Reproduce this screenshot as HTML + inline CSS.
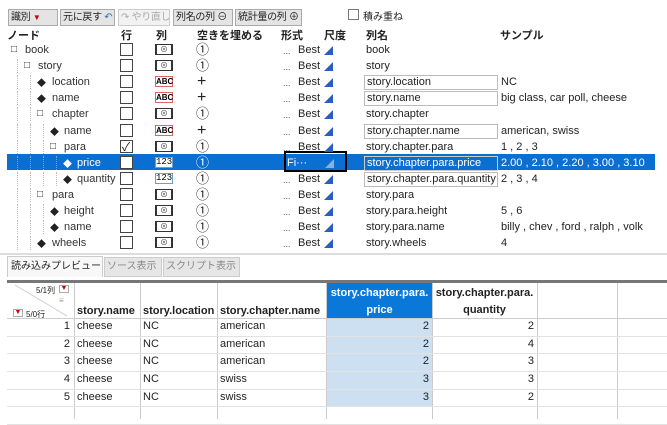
<!DOCTYPE html>
<html><head><meta charset="utf-8"><style>
*{box-sizing:border-box;margin:0;padding:0}
body{width:667px;height:419px;overflow:hidden;background:#fff;font-family:"Liberation Sans","Noto Sans CJK JP",sans-serif;font-size:11px;color:#222;position:relative}
.a{position:absolute;white-space:nowrap}
.btn{position:absolute;top:9px;height:17px;border:1px solid #aaa;background:#e4e4e4;font-size:10px;line-height:15px;padding:0 2px;white-space:nowrap;overflow:hidden;letter-spacing:-0.3px}
.cb{position:absolute;width:13px;height:13px;border:1px solid #444;background:#fff}
.ci{position:absolute;width:18px;height:11px;border:1px solid #333;border-left-width:2px;border-right-width:2px;font-size:8px;line-height:9px;text-align:center;color:#555}
.abc{border:1px solid #d66;font-weight:bold;color:#000;font-size:8px;border-width:1px}
.n123{border:1px solid #6aa0d0;font-family:"Liberation Mono",monospace;font-size:9px;color:#000;border-width:1px}
.fl{position:absolute;font-size:13px;line-height:12px}
.tri{position:absolute;width:0;height:0;border-left:9px solid transparent;border-bottom:9px solid #2a5fc0}
.nb{position:absolute;height:15px;border:1px solid #bbb;background:#fff;padding-left:2px;line-height:13px;width:134px}
.dots{position:absolute;font-size:9px;color:#555}
.vl{position:absolute;border-left:1px dotted #bbb;width:0;height:14px}
.hd{position:absolute;font-weight:bold;font-size:11px}
</style></head><body>
<div class="btn" style="left:8px;width:50px">識別 <span style="color:#c00;font-size:8px">▼</span></div>
<div class="btn" style="left:60px;width:55px">元に戻す <span style="color:#2a6fc0">↶</span></div>
<div class="btn" style="left:118px;width:52px;color:#aaa;background:#f2f2f2;border-color:#ccc">↷ やり直し</div>
<div class="btn" style="left:173px;width:60px">列名の列 ⊖</div>
<div class="btn" style="left:235px;width:67px">統計量の列 ⊕</div>
<div class="cb" style="left:348px;top:9px;width:11px;height:11px;border-color:#777"></div>
<div class="a" style="left:363px;top:8px;font-size:10px">積み重ね</div>
<div class="hd a" style="left:7px;top:27px">ノード</div>
<div class="hd a" style="left:121px;top:27px">行</div>
<div class="hd a" style="left:156px;top:27px">列</div>
<div class="hd a" style="left:197px;top:27px">空きを埋める</div>
<div class="hd a" style="left:281px;top:27px">形式</div>
<div class="hd a" style="left:324px;top:27px">尺度</div>
<div class="hd a" style="left:366px;top:27px">列名</div>
<div class="hd a" style="left:500px;top:27px">サンプル</div>
<div class="a" style="left:7px;top:154px;width:648px;height:16px;background:#0a6fd0"></div>
<div class="a" style="left:284px;top:151px;width:63px;height:21px;border:2px solid #000"></div>
<div id="rows"></div>
<div class="a" style="left:0;top:253px;width:667px;height:2px;background:#ddd"></div>
<div class="a" style="left:7px;top:256px;width:96px;height:21px;border:1px solid #ccc;border-bottom:none;background:#f8f8f8;line-height:20px;padding-left:3px;font-size:10px;overflow:hidden">読み込みプレビュー</div>
<div class="a" style="left:104px;top:257px;width:58px;height:20px;background:#e6e6e6;border:1px solid #ccc;color:#888;line-height:18px;padding-left:2px;font-size:10px;overflow:hidden">ソース表示</div>
<div class="a" style="left:163px;top:257px;width:77px;height:20px;background:#e6e6e6;border:1px solid #ccc;color:#888;line-height:18px;padding-left:2px;font-size:10px;overflow:hidden">スクリプト表示</div>
<div class="a" style="left:7px;top:280px;width:660px;height:3px;background:#777"></div>
<div id="tbl"></div>
<script>
var R=[
["□",14,25,"book","c","1",0,"book",""],
["□",27,38,"story","c","1",0,"story",""],
["◆",40,52,"location","a","+",0,"story.location","NC",1],
["◆",40,52,"name","a","+",0,"story.name","big class, car poll, cheese",1],
["□",40,52,"chapter","c","1",0,"story.chapter",""],
["◆",53,64,"name","a","+",0,"story.chapter.name","american, swiss",1],
["□",53,64,"para","c","1",1,"story.chapter.para","1 , 2 , 3"],
["◆",66,77,"price","n","1",0,"story.chapter.para.price","2.00 , 2.10 , 2.20 , 3.00 , 3.10",1],
["◆",66,77,"quantity","n","1",0,"story.chapter.para.quantity","2 , 3 , 4",1],
["□",40,52,"para","c","1",0,"story.para",""],
["◆",53,64,"height","c","1",0,"story.para.height","5 , 6"],
["◆",53,64,"name","c","1",0,"story.para.name","billy , chev , ford , ralph , volk"],
["◆",40,52,"wheels","c","1",0,"story.wheels","4"]];
var h="";
R.forEach(function(r,i){var y=42+i*16.1,ty=y+2,sel=i==7,c=sel?"#fff":"#222";
for(var x=14;x<r[1]-4;x+=13)h+='<div class="vl" style="left:'+(x+3)+'px;top:'+(y+1)+'px;border-color:'+(sel?'#7ab':'#bbb')+'"></div>';
h+='<div class="a" style="left:'+(r[1]-3)+'px;top:'+ty+'px;font-size:'+(r[0]=="□"?10:9)+'px;color:'+c+'">'+r[0]+'</div>';
h+='<div class="a" style="left:'+r[2]+'px;top:'+ty+'px;color:'+(sel?"#fff":"#333")+'">'+r[3]+'</div>';
h+='<div class="cb" style="left:120px;top:'+(y+1)+'px">'+(r[6]?'<span style="position:absolute;left:1px;top:-3px;font-size:12px">✓</span>':'')+'</div>';
var t=r[4]=="c"?'<div class="ci" style="left:155px;top:'+(y+2)+'px">⊗</div>':r[4]=="a"?'<div class="ci abc" style="left:155px;top:'+(y+2)+'px">ABC</div>':'<div class="ci n123" style="left:155px;top:'+(y+2)+'px;background:#fff">123</div>';
h+=t;
h+=r[5]=="1"?'<div class="fl" style="left:196px;top:'+(y+2)+'px;color:'+c+'">①</div>':'<div class="fl" style="left:197px;top:'+(y+2)+'px;font-size:16px">+</div>';
if(sel){h+='<div class="a" style="left:287px;top:'+ty+'px;color:#fff">Fi···</div><div class="tri" style="left:325px;top:'+(y+4)+'px;border-bottom-color:#8ab0d8"></div>';}
else{h+='<div class="dots" style="left:283px;top:'+(ty+2)+'px">...</div><div class="a" style="left:298px;top:'+ty+'px">Best</div><div class="tri" style="left:324px;top:'+(y+4)+'px"></div>';}
if(r[9])h+='<div class="nb" style="left:364px;top:'+(y+1)+'px;'+(sel?'background:#0a6fd0;color:#fff;border-color:#ccc':'')+'">'+r[7]+'</div>';
else h+='<div class="a" style="left:366px;top:'+ty+'px">'+r[7]+'</div>';
h+='<div class="a" style="left:501px;top:'+ty+'px;color:'+c+'">'+r[8]+'</div>';});
document.getElementById("rows").innerHTML=h;
var cols=[7,74,140,217,326,432,537,617,667];
var D=[["cheese","NC","american",2,2],["cheese","NC","american",2,4],["cheese","NC","american",2,3],["cheese","NC","swiss",3,3],["cheese","NC","swiss",3,2]];
var t="";
for(var i=1;i<cols.length-1;i++)t+='<div class="a" style="left:'+cols[i]+'px;top:283px;width:1px;height:136px;background:#ccc"></div>';
t+='<div class="a" style="left:327px;top:283px;width:105px;height:35px;background:#0a78d8"></div>';
t+='<div class="a" style="left:327px;top:318px;width:105px;height:88px;background:#cce0f2"></div>';
t+='<div class="a" style="left:7px;top:318px;width:660px;height:1px;background:#ccc"></div>';
for(var j=0;j<6;j++)t+='<div class="a" style="left:7px;top:'+(335.5+j*17.7)+'px;width:660px;height:1px;background:#e2e2e2"></div>';
t+='<svg class="a" style="left:7px;top:283px" width="67" height="35"><line x1="8" y1="2" x2="60" y2="33" stroke="#ccc"/></svg>';
t+='<div class="a" style="left:36px;top:285px;font-size:8px">5/1列</div><div class="a" style="left:59px;top:285px;width:10px;height:8px;border:1px solid #aaa;color:#c00;font-size:7px;line-height:6px;text-align:center">▼</div>';
t+='<div class="a" style="left:59px;top:296px;font-size:8px;color:#8a8">≡</div>';
t+='<div class="a" style="left:13px;top:309px;width:10px;height:8px;border:1px solid #aaa;color:#c00;font-size:7px;line-height:6px;text-align:center">▼</div><div class="a" style="left:26px;top:309px;font-size:8px">5/0行</div>';
t+='<div class="hd a" style="left:77px;top:305px">story.name</div><div class="hd a" style="left:143px;top:305px">story.location</div><div class="hd a" style="left:220px;top:305px">story.chapter.name</div>';
t+='<div class="hd a" style="left:327px;top:285px;width:105px;text-align:center;color:#fff;line-height:17px">story.chapter.para.<br>price</div>';
t+='<div class="hd a" style="left:432px;top:285px;width:105px;text-align:center;line-height:17px">story.chapter.para.<br>quantity</div>';
D.forEach(function(d,i){var y=320+i*17.7;
t+='<div class="a" style="left:7px;top:'+y+'px;width:63px;text-align:right">'+(i+1)+'</div>';
t+='<div class="a" style="left:77px;top:'+y+'px">'+d[0]+'</div><div class="a" style="left:143px;top:'+y+'px">'+d[1]+'</div><div class="a" style="left:220px;top:'+y+'px">'+d[2]+'</div>';
t+='<div class="a" style="left:327px;top:'+y+'px;width:102px;text-align:right">'+d[3]+'</div><div class="a" style="left:432px;top:'+y+'px;width:102px;text-align:right">'+d[4]+'</div>';});
document.getElementById("tbl").innerHTML=t;
</script>
</body></html>
